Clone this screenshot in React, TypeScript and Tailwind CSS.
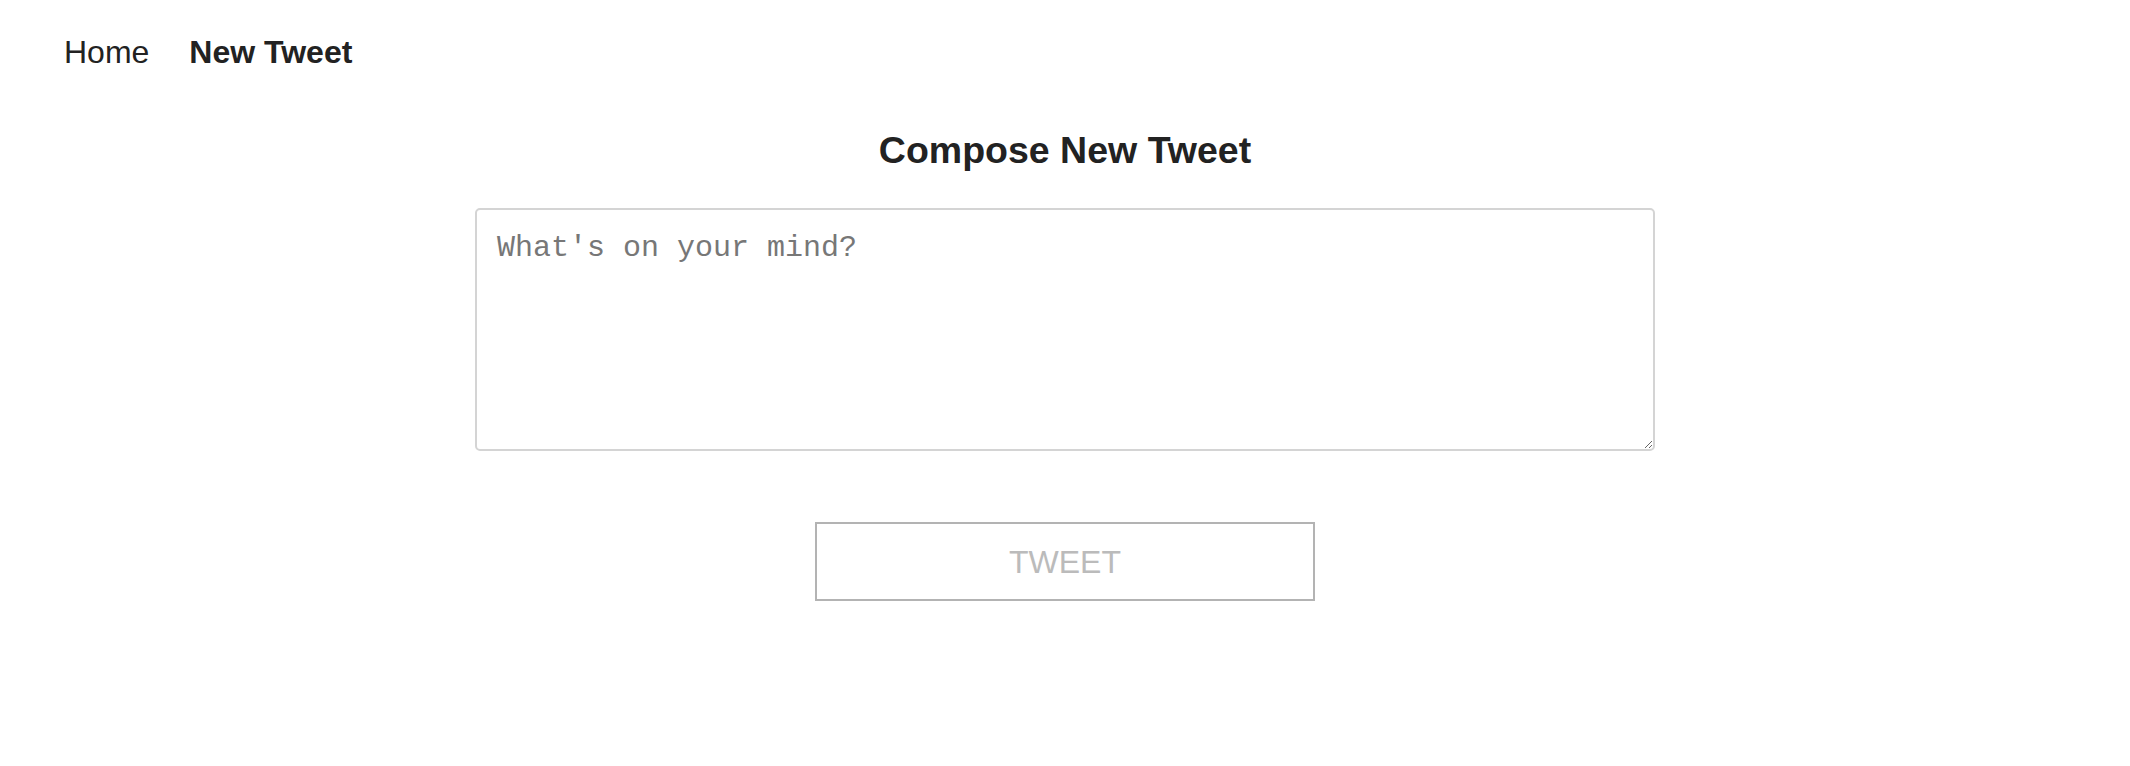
import React from "react";

export default function App() {
  return (
    <div className="min-h-screen bg-white font-['Liberation_Sans',Arial,sans-serif] text-[#222]">
      {/* top nav */}
      <nav className="flex items-center gap-[40px] pl-[64px] pt-[34px] text-[32px] leading-[37px]">
        <a className="cursor-pointer">Home</a>
        <a className="cursor-pointer font-bold">New Tweet</a>
      </nav>

      <main className="flex flex-col items-center">
        <h1 className="mt-[58px] text-[37.5px] font-bold leading-[43px]">Compose New Tweet</h1>

        <textarea
          placeholder="What's on your mind?"
          className="mt-[36px] h-[243px] w-[1180px] rounded-[5px] border-2 border-[#d4d4d4] bg-white px-[20px] pt-[16px] pb-[20px] font-['Liberation_Mono','Courier_New',monospace] text-[30px] text-[#222] outline-none placeholder:text-[#777]"
        />

        <button
          disabled
          className="mt-[71px] h-[79px] w-[500px] border-2 border-[#b3b3b3] bg-white text-[32px] text-[#bbb]"
        >
          TWEET
        </button>
      </main>
    </div>
  );
}
